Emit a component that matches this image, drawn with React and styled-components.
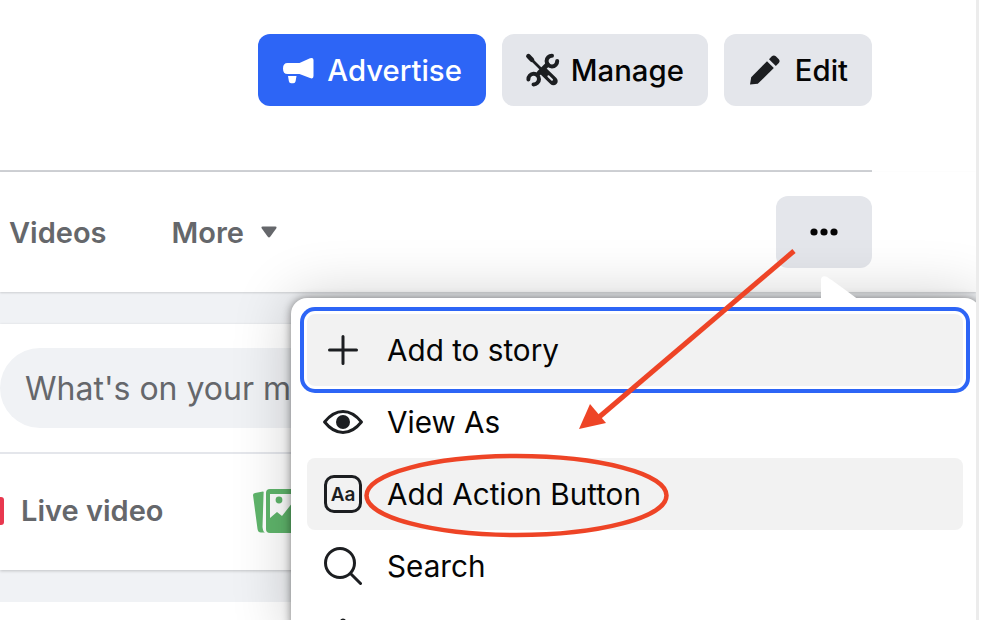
import styled, { createGlobalStyle } from "styled-components";

const GlobalStyle = createGlobalStyle`
  html, body {
    margin: 0;
    padding: 0;
    background: #fff;
    overflow: hidden;
  }
  body {
    font-family: Inter, "Liberation Sans", sans-serif;
    color: #050505;
  }
`;

const MegaphoneIcon = () => (
  <svg width="32" height="27" viewBox="0 0 32 27" fill="#fff">
    <path d="M4.5 6H16.5L27 1.3Q30.5 0 30.5 3V19Q30.5 22.6 27 21L16.5 17H4.5Q0 17 0 11.5Q0 6 4.5 6Z" />
    <path d="M5 19H13.5L12.6 24.2Q12.2 26.3 10.3 26.3H8.2Q6.2 26.3 5.9 24.2Z" />
  </svg>
);

const ToolsIcon = () => (
  <svg width="32" height="32" viewBox="1 0 32 32" overflow="visible" fill="none" stroke="#1c1e21" strokeLinecap="round">
    <path d="M13 19L21.5 10.5" strokeWidth="4.6" />
    <path d="M26 1.8A5.3 5.3 0 1 0 31.2 7" strokeWidth="4" />
    <path d="M7.5 30.4A5.3 5.3 0 1 0 2.4 25.4" strokeWidth="4" />
    <path d="M2.4 2.2L6 5.8" strokeWidth="4.6" />
    <path d="M5 5L15.5 15.5" strokeWidth="2.8" />
    <path d="M18.4 18.2L27.4 27" strokeWidth="8.6" />
    <path d="M22.4 22.2L26 25.8" strokeWidth="2" stroke="#e4e6eb" />
  </svg>
);

const PenIcon = () => (
  <svg width="34" height="30" viewBox="-1 0 34 30" fill="#1c1e21">
    <path d="M0 29.5L1.2 22.3L17 6.2L23.8 13L7.8 28.8Z" />
    <path d="M19 4.2L21.8 1.2Q23.8 -.2 25.8 1.2L28.8 4.2Q30.4 6 28.8 8L25.8 11Z" />
  </svg>
);

const DotsIcon = () => (
  <svg width="28" height="8" viewBox="0 0 28 8" fill="#050505">
    <circle cx="4" cy="4" r="3.6" />
    <circle cx="14" cy="4" r="3.6" />
    <circle cx="24" cy="4" r="3.6" />
  </svg>
);

const CaretIcon = () => (
  <svg width="16" height="12" viewBox="0 0 16 12" fill="#65676b">
    <path d="M1.6 .6H14.4Q16.2 .6 15.2 2.4L9.2 10.8Q8 12 6.8 10.8L.8 2.4Q-.2 .6 1.6 .6Z" />
  </svg>
);

const PhotoIcon = () => (
  <svg width="50" height="44" viewBox="0 0 50 44">
    <path d="M2 4L10 2.5Q11 2.5 10.6 4L9.5 38Q10 43 12 43.5L8 43.5Q5 43.5 4.5 40L0 6Q0 4.4 2 4Z" fill="#5fb56b" />
    <rect x="13" y="0" width="37" height="44" rx="4" fill="#5fb56b" />
    <path d="M17 5H48V20L40 13L29 27L24 23L17 29Z" fill="#fff" />
    <circle cx="26" cy="11" r="3.4" fill="#5fb56b" />
    <path d="M17 5H50V3H15V30L17 29Z" fill="#5fb56b" />
  </svg>
);

const PlusIcon = () => (
  <svg width="30" height="30" viewBox="0 0 30 30" fill="none" stroke="#1c1e21" strokeWidth="3" strokeLinecap="round">
    <path d="M15 1.5V28.5M1.5 15H28.5" />
  </svg>
);

const EyeIcon = () => (
  <svg width="40" height="24" viewBox="0 0 40 24">
    <path d="M1.6 12C8 4 14 1.5 20 1.5S32 4 38.4 12C32 20 26 22.5 20 22.5S8 20 1.6 12Z" fill="none" stroke="#1c1e21" strokeWidth="3" strokeLinejoin="round" />
    <circle cx="20" cy="12" r="7" fill="#1c1e21" />
  </svg>
);

const SearchIcon = () => (
  <svg width="38" height="38" viewBox="0 0 38 38" fill="none" stroke="#1c1e21" strokeWidth="3" strokeLinecap="round">
    <circle cx="16" cy="16" r="14.5" />
    <path d="M27 27L36.5 36.5" />
  </svg>
);

const TipIcon = () => (
  <svg width="40" height="40" viewBox="0 0 40 40" fill="#1c1e21">
    <path d="M17 3.5Q17 .4 20 .4Q23 .4 23 3.5V40H17Z" />
  </svg>
);

const NotchShape = () => (
  <svg width="40" height="24" viewBox="0 0 40 24" fill="#fff">
    <path d="M0 24V4Q0 -.6 5 .4Q8 1.5 38 24Z" />
  </svg>
);

// red arrow and circle that were drawn on top of the screenshot
const Annotations = () => (
  <Markup viewBox="0 0 986 620" width="986" height="620">
    <path d="M794 251L598 418" fill="none" stroke="#ee4426" strokeWidth="5" />
    <path d="M579 429L590 404L606 423Z" fill="#ee4426" />
    <ellipse cx="516.5" cy="495.5" rx="150" ry="39.5" fill="none" stroke="#ee4426" strokeWidth="4.5" />
  </Markup>
);

export default function App() {
  return (
    <>
      <GlobalStyle />
      <Page>
        <Main>
          <Header>
            <HeaderButton $primary>
              <MegaphoneIcon />
              Advertise
            </HeaderButton>
            <HeaderButton>
              <ToolsIcon />
              Manage
            </HeaderButton>
            <HeaderButton>
              <PenIcon />
              Edit
            </HeaderButton>
          </Header>

          <Tabs>
            <Tab>Videos</Tab>
            <Tab>
              More
              <CaretIcon />
            </Tab>
            <DotsButton>
              <DotsIcon />
            </DotsButton>
          </Tabs>

          <Composer>
            <Prompt>
              <PromptPill>What's on your mind?</PromptPill>
            </Prompt>
            <ComposerActions>
              <LiveMark />
              <ComposerLabel>Live video</ComposerLabel>
              <PhotoSlot>
                <PhotoIcon />
              </PhotoSlot>
            </ComposerActions>
          </Composer>

          <NextCard />
        </Main>

        <Scrollbar />

        <Notch>
          <NotchShape />
        </Notch>
        <Menu>
          <MenuItem $focused>
            <IconSlot>
              <PlusIcon />
            </IconSlot>
            Add to story
          </MenuItem>
          <MenuItem>
            <IconSlot>
              <EyeIcon />
            </IconSlot>
            View As
          </MenuItem>
          <MenuItem $hovered>
            <IconSlot>
              <AaBox>Aa</AaBox>
            </IconSlot>
            Add Action Button
          </MenuItem>
          <MenuItem>
            <IconSlot>
              <SearchIcon />
            </IconSlot>
            Search
          </MenuItem>
          <MenuItem>
            <IconSlot>
              <TipIcon />
            </IconSlot>
          </MenuItem>
        </Menu>

        <Annotations />
      </Page>
    </>
  );
}

const Page = styled.div`
  position: relative;
  width: 986px;
  height: 620px;
  display: flex;
  overflow: hidden;
  background: #fff;
`;

const Main = styled.div`
  width: 976px;
  flex-shrink: 0;
  display: flex;
  flex-direction: column;
  background: #f0f2f5;
`;

const Scrollbar = styled.div`
  position: relative;
  z-index: 3;
  flex: 1;
  background: #fff;
  border-left: 3px solid #ececec;
`;

const Header = styled.div`
  box-sizing: border-box;
  height: 172px;
  display: flex;
  justify-content: flex-end;
  align-items: flex-start;
  gap: 16px;
  padding: 34px 104px 0 0;
  background: #fff;
  background-image: linear-gradient(#ced0d4, #ced0d4);
  background-repeat: no-repeat;
  background-size: 872px 2px;
  background-position: left bottom;
`;

const HeaderButton = styled.div`
  height: 72px;
  display: flex;
  align-items: center;
  gap: 12px;
  padding: 0 24px 0 25px;
  border-radius: 12px;
  font-size: 29.3px;
  font-weight: 500;
  background: ${(p) => (p.$primary ? "#2d65f6" : "#e4e6eb")};
  color: ${(p) => (p.$primary ? "#fff" : "#050505")};
`;

const Tabs = styled.div`
  box-sizing: border-box;
  height: 120px;
  display: flex;
  align-items: center;
  gap: 65px;
  padding: 0 104px 0 9px;
  background: #fff;
  box-shadow: 0 1px 2px rgba(0, 0, 0, 0.15);
`;

const Tab = styled.div`
  display: flex;
  align-items: center;
  gap: 17px;
  font-size: 29px;
  font-weight: 600;
  color: #65676b;
`;

const DotsButton = styled.div`
  width: 96px;
  height: 72px;
  margin-left: auto;
  display: flex;
  align-items: center;
  justify-content: center;
  border-radius: 12px;
  background: #e4e6eb;
`;

const Composer = styled.div`
  margin-top: 32px;
  height: 246px;
  display: flex;
  flex-direction: column;
  background: #fff;
  box-shadow: 0 1px 3px rgba(0, 0, 0, 0.2);
`;

const Prompt = styled.div`
  height: 130px;
  padding-top: 24px;
  box-sizing: border-box;
  border-bottom: 2px solid #e4e6eb;
`;

const PromptPill = styled.div`
  box-sizing: border-box;
  width: 872px;
  height: 80px;
  display: flex;
  align-items: center;
  padding-left: 25px;
  border-radius: 40px;
  background: #f0f2f5;
  font-size: 32px;
  color: #65676b;
`;

const ComposerActions = styled.div`
  flex: 1;
  display: flex;
  align-items: center;
  padding-bottom: 3px;
`;

const LiveMark = styled.div`
  width: 4px;
  height: 28px;
  border-radius: 0 3px 3px 0;
  background: #e8384f;
`;

const ComposerLabel = styled.div`
  margin-left: 17px;
  font-size: 29px;
  font-weight: 600;
  color: #65676b;
`;

const PhotoSlot = styled.div`
  display: flex;
  margin-left: 90px;
`;

const NextCard = styled.div`
  margin-top: 32px;
  flex: 1;
  background: #fff;
`;

const Notch = styled.div`
  position: absolute;
  left: 821px;
  top: 276px;
  z-index: 2;
  display: flex;
`;

const Menu = styled.div`
  position: absolute;
  z-index: 1;
  left: 291px;
  top: 298px;
  box-sizing: border-box;
  width: 690px;
  height: 340px;
  padding: 16px 18px 0 16px;
  border-radius: 16px;
  background: #fff;
  box-shadow: 0 0 8px rgba(0, 0, 0, 0.45), 0 0 60px rgba(0, 0, 0, 0.2);
`;

const MenuItem = styled.div`
  box-sizing: border-box;
  height: 72px;
  width: 656px;
  display: flex;
  align-items: center;
  gap: 24px;
  padding-left: 16px;
  border-radius: 8px;
  font-size: 29.7px;
  color: #050505;
  background: ${(p) => (p.$focused || p.$hovered ? "#f2f2f2" : "transparent")};
  box-shadow: ${(p) => (p.$focused ? "0 0 0 3px #fff, 0 0 0 7px #2d65f6" : "none")};
`;

const IconSlot = styled.div`
  width: 40px;
  display: flex;
  justify-content: center;
`;

const AaBox = styled.div`
  box-sizing: border-box;
  width: 38px;
  height: 38px;
  display: flex;
  align-items: center;
  justify-content: center;
  border: 3px solid #1c1e21;
  border-radius: 10px;
  font-size: 19px;
  font-weight: 600;
  color: #1c1e21;
`;

const Markup = styled.svg`
  position: absolute;
  z-index: 4;
  left: 0;
  top: 0;
  pointer-events: none;
`;
